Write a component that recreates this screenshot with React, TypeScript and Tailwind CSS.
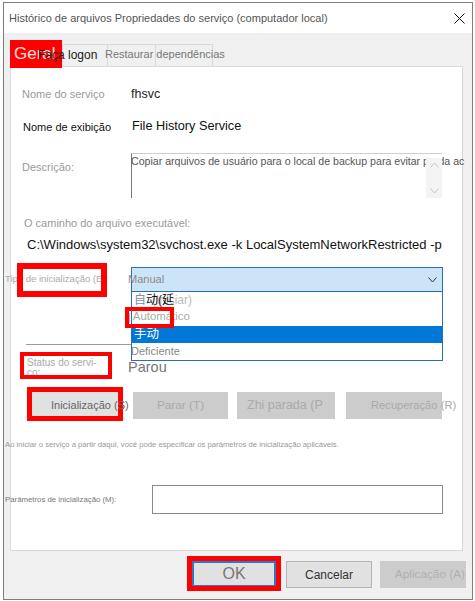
import React from "react";

function Chevron({ up, className }: { up?: boolean; className?: string }) {
  return (
    <svg width="9" height="6" viewBox="0 0 9 6" className={className}>
      <path
        d={up ? "M0.5 5.5 L4.5 1 L8.5 5.5" : "M0.5 0.5 L4.5 5 L8.5 0.5"}
        fill="none"
        stroke="currentColor"
        strokeWidth="1"
      />
    </svg>
  );
}

export default function App() {
  return (
    <div className="relative w-[475px] h-[601px] bg-white overflow-hidden pl-[3px] pt-[2px] font-['Liberation_Sans','Noto_Sans_CJK_SC',Arial,sans-serif]">
      {/* window */}
      <div className="w-[470px] h-[598px] border border-[#7c7c7c] flex flex-col">
        {/* title bar */}
        <div className="h-[30px] bg-white flex items-center justify-between pl-[5px] pr-[7px] shrink-0">
          <span className="text-[11px] text-[#555] whitespace-nowrap">
            Histórico de arquivos Propriedades do serviço (computador local)
          </span>
          <svg width="11" height="11" viewBox="0 0 11 11">
            <path d="M0.5 0.5 L10.5 10.5 M10.5 0.5 L0.5 10.5" stroke="#111" strokeWidth="1" />
          </svg>
        </div>

        {/* body */}
        <div className="flex-1 bg-[#f0f0f0] flex flex-col pl-[6px] pt-[11px]">
          {/* tabs */}
          <div className="flex h-[22px] shrink-0">
            <div className="w-[52px] h-full border-l border-t border-[#d9d9d9] bg-white" />
            <div className="w-[45px] h-full border-l border-t border-[#d9d9d9] flex items-center pb-[2px]">
              <span className="relative z-10 -ml-[25px] text-[12px] text-[#222] whitespace-nowrap">Faça logon</span>
            </div>
            <div className="w-[48px] h-full border-l border-t border-[#d9d9d9] flex items-center pb-[2px]">
              <span className="relative z-10 -ml-[3px] text-[11px] text-[#777] whitespace-nowrap">Restaurar dependências</span>
            </div>
            <div className="w-[58px] h-full border-l border-t border-r border-[#d9d9d9]" />
          </div>

          {/* panel */}
          <div className="w-[453px] h-[485px] bg-white border border-[#d9d9d9] flex flex-col shrink-0">
            {/* service name */}
            <div className="flex items-center h-[20px] mt-[17px]">
              <span className="ml-[11px] w-[109px] text-[11px] text-[#9a9a9a] whitespace-nowrap">Nome do serviço</span>
              <span className="text-[12.5px] text-[#222]">fhsvc</span>
            </div>
            {/* display name */}
            <div className="flex items-center h-[20px] mt-[13px]">
              <span className="ml-[12px] w-[109px] text-[11px] text-[#111] whitespace-nowrap">Nome de exibição</span>
              <span className="text-[12.7px] text-[#111] whitespace-nowrap">File History Service</span>
            </div>
            {/* description */}
            <div className="flex h-[45px] mt-[16px]">
              <span className="ml-[11px] w-[109px] mt-[6px] text-[11px] text-[#9a9a9a]">Descrição:</span>
              <div className="relative w-[311px] h-full border-l border-t border-l-[#777] border-t-[#cfcfcf]">
                <span className="absolute left-[-1px] top-[0px] text-[10.6px] text-[#555] whitespace-nowrap">
                  Copiar arquivos de usuário para o local de backup para evitar perda ac
                </span>
                <div className="absolute right-0 top-[4px] bottom-0 w-[16px] bg-[#f4f4f4] flex flex-col items-center justify-between py-[4px] text-[#c4c4c4]">
                  <Chevron up />
                  <Chevron />
                </div>
              </div>
            </div>
            {/* path label */}
            <div className="flex items-center h-[16px] mt-[17px]">
              <span className="ml-[13px] text-[11px] text-[#9a9a9a] whitespace-nowrap">O caminho do arquivo executável:</span>
            </div>
            {/* path */}
            <div className="flex items-center h-[18px] mt-[5px]">
              <span className="ml-[16px] text-[13px] text-[#111] whitespace-nowrap">
                C:\Windows\system32\svchost.exe -k LocalSystemNetworkRestricted -p
              </span>
            </div>
            {/* startup type */}
            <div className="flex items-center h-[25px] mt-[13px]">
              <span className="-ml-[6px] w-[126px] text-[9.5px] text-[#aaa] whitespace-nowrap">Tipo de inicialização (E):</span>
              <div className="relative w-[312px] h-full">
                <div className="w-full h-full bg-[#cce4f7] border border-[#2c6cb0] flex items-center justify-between pl-0 pr-[5px]">
                  <span className="-ml-[4px] text-[11px] text-[#8a8a8a]">Manual</span>
                  <Chevron className="text-[#333]" />
                </div>
                {/* dropdown list */}
                <div className="absolute left-0 top-full w-[312px] h-[69px] bg-white border border-[#2c6cb0] border-t-0 z-[2] flex flex-col">
                  <div className="relative h-[16px] flex items-center">
                    <span className="absolute left-[20px] text-[12px] text-[#bdbdbd] whitespace-nowrap">(Iniciar)</span>
                    <span className="relative ml-[2px] text-[12px] text-[#111] whitespace-nowrap">
                      <span className="text-[#7a8fa8]">自</span>动(延
                    </span>
                  </div>
                  <div className="h-[18px] flex items-center">
                    <span className="-ml-[4px] mr-[2px] text-[11px] text-[#999]">|</span>
                    <span className="text-[11.4px] text-[#aaa]">Automático</span>
                  </div>
                  <div className="h-[17px] bg-[#0078d7] flex items-center">
                    <span className="ml-[2px] text-[12.5px] text-white">手动</span>
                  </div>
                  <div className="h-[16px] flex items-center">
                    <span className="-ml-[1px] text-[11px] text-[#888]">Deficiente</span>
                  </div>
                </div>
              </div>
            </div>
            {/* separator */}
            <div className="ml-[15px] mt-[52px] w-[105px] h-px bg-[#9a9a9a]" />
            {/* status */}
            <div className="flex items-start h-[24px] mt-[9px]">
              <span className="ml-[16px] w-[101px] mt-[4px] text-[10px] leading-[10px] text-[#aaa]">
                Status do servi-
                <br />
                ço:
              </span>
              <span className="mt-[3px] text-[14.5px] text-[#777]">Parou</span>
            </div>
            {/* buttons */}
            <div className="flex items-center h-[27px] mt-[14px]">
              <div className="ml-[18px] w-[92px] h-[27px] bg-[#e1e1e1] flex items-center">
                <span className="ml-[22px] text-[11px] text-[#666] whitespace-nowrap relative z-10">Inicialização (S)</span>
              </div>
              <div className="ml-[12px] w-[95px] h-[27px] bg-[#cccccc] flex items-center justify-center">
                <span className="text-[11.8px] text-[#aaa]">Parar (T)</span>
              </div>
              <div className="ml-[9px] w-[98px] h-[27px] bg-[#cccccc] flex items-center">
                <span className="ml-[10px] text-[12.5px] text-[#aaa] whitespace-nowrap">Zhi parada (P</span>
              </div>
              <div className="ml-[11px] w-[96px] h-[27px] bg-[#cccccc] flex items-center">
                <span className="ml-[25px] text-[11.2px] text-[#aaa] whitespace-nowrap">Recuperação (R)</span>
              </div>
            </div>
            {/* hint */}
            <div className="flex items-center h-[10px] mt-[21px]">
              <span className="-ml-[6px] text-[7.7px] text-[#999] whitespace-nowrap">
                Ao iniciar o serviço a partir daqui, você pode especificar os parâmetros de inicialização aplicáveis.
              </span>
            </div>
            {/* params */}
            <div className="flex items-center h-[29px] mt-[35px]">
              <span className="-ml-[6px] w-[147px] text-[7.8px] text-[#777] whitespace-nowrap">Parâmetros de inicialização (M):</span>
              <div className="w-[291px] h-full border border-[#8a8a8a] bg-white" />
            </div>
          </div>

          {/* bottom buttons */}
          <div className="flex items-start mt-[10px] ml-[182px]">
            <div className="w-[84px] h-[26px] bg-[#e1e1e1] border-2 border-[#2a78c8] flex items-center justify-center">
              <span className="text-[16px] text-[#777]">OK</span>
            </div>
            <div className="ml-[10px] w-[86px] h-[27px] bg-[#e1e1e1] border border-[#b5b5b5] flex items-center justify-center">
              <span className="text-[12px] text-[#333]">Cancelar</span>
            </div>
            <div className="ml-[8px] w-[86px] h-[27px] bg-[#cccccc] flex items-center justify-end pr-[1px]">
              <span className="text-[11.8px] text-[#b0b0b0] whitespace-nowrap">Aplicação (A)</span>
            </div>
          </div>
        </div>
      </div>

      {/* red annotation boxes */}
      <div className="absolute left-[10px] top-[40px] w-[52px] h-[28px] bg-[#ff0000] z-[5] flex items-center">
        <span className="ml-[4px] text-[17px] text-[#ffe0e0]">Geral</span>
      </div>
      <div className="absolute left-[17px] top-[263px] w-[90px] h-[34px] border-[6px] border-[#ff0000] z-[5]" />
      <div className="absolute left-[125px] top-[307px] w-[49px] h-[21px] border-[4px] border-[#ff0000] z-[5]" />
      <div className="absolute left-[20px] top-[352px] w-[92px] h-[27px] border-[4px] border-[#ff0000] z-[5]" />
      <div className="absolute left-[27px] top-[387px] w-[96px] h-[34px] border-[5px] border-[#ff0000] z-[5]" />
      <div className="absolute left-[187px] top-[556px] w-[94px] h-[35px] border-[5px] border-[#ff0000] z-[5]" />
    </div>
  );
}
